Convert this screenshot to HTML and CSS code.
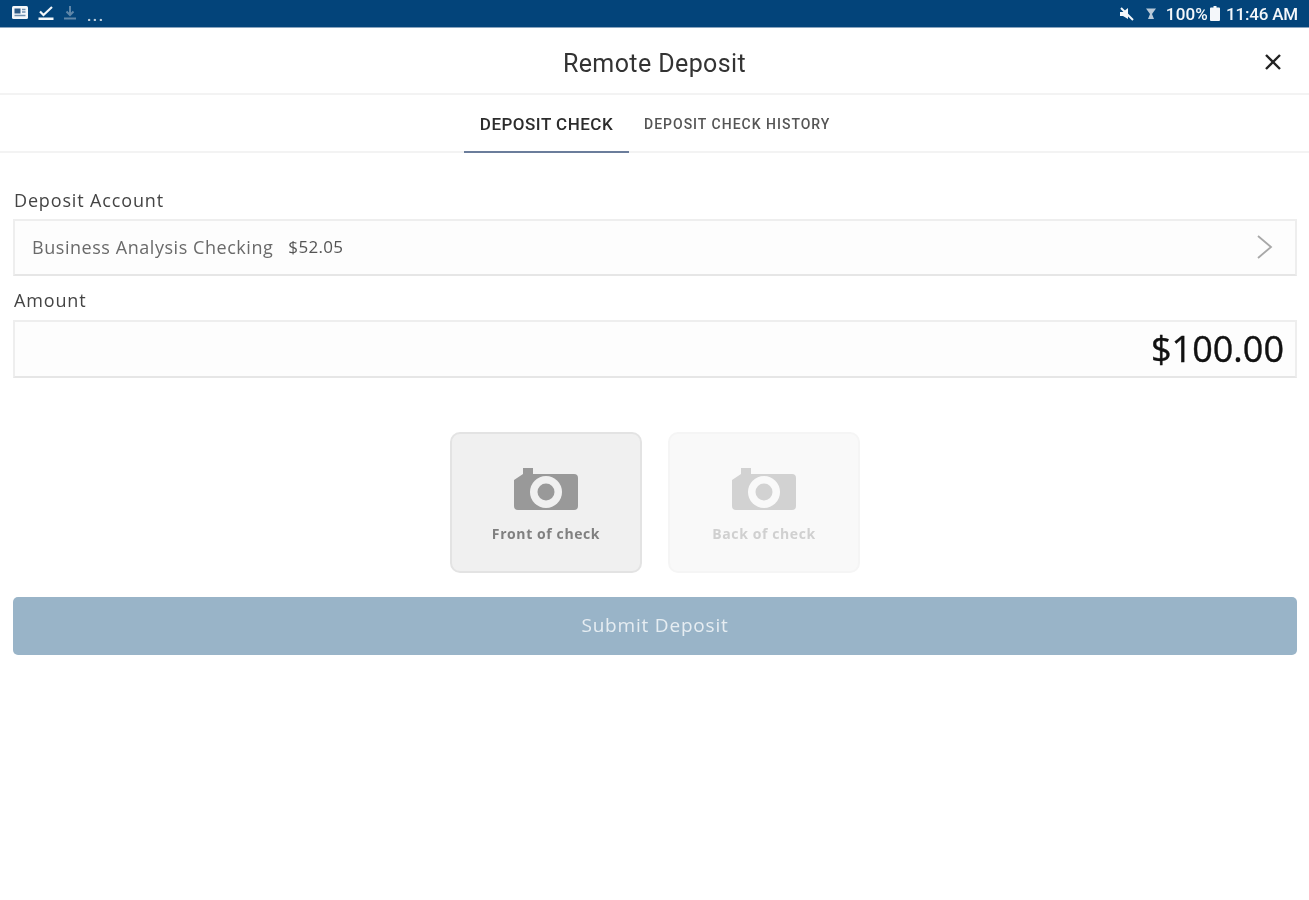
FILE: index.html
```html
<!DOCTYPE html>
<html lang="en">
<head>
<meta charset="utf-8">
<title>Remote Deposit</title>
<link rel="stylesheet" href="styles.css">
</head>
<body>
<div class="status">
  <div class="status-left">
    <svg class="si" width="18" height="16" viewBox="0 0 18 16"><rect x="1" y="1" width="16" height="13" rx="1.500" fill="#f4f7fa"/><rect x="3.500" y="3.500" width="6" height="5" fill="#2d5a85"/><path d="M11 4.500h3.500M11 7h3.500M3.500 10.500h11" stroke="#6f8fae" stroke-width="1.300"/></svg>
    <svg class="si" width="16" height="16" viewBox="0 0 16 16"><path d="M2 6.500 5.500 10 14 2" fill="none" stroke="#f4f7fa" stroke-width="2.200"/><rect x="0.500" y="12.500" width="15" height="2.500" fill="#f4f7fa"/></svg>
    <svg class="si" width="14" height="16" viewBox="0 0 14 16"><path d="M7 1v8M3.500 6.500 7 10l3.500-3.500M1 13.500h12" fill="none" stroke="#5f86a8" stroke-width="2"/></svg>
    <span class="dots">...</span>
  </div>
  <div class="status-right">
    <svg width="16" height="14" viewBox="0 0 16 14"><path d="M1 5h3l5-4v11L4 9H1z" fill="#f4f7fa"/><path d="M2 1l12 12" stroke="#f4f7fa" stroke-width="2"/></svg>
    <svg class="alarm" width="12" height="14" viewBox="0 0 12 14"><path d="M1 1.500h10L7 7l2 5H3l2-5z" fill="#b8c9d8"/></svg>
    <span class="pct">100%</span>
    <svg width="10" height="15" viewBox="0 0 10 15"><path d="M3.500 0h3v1.500H9a1 1 0 0 1 1 1V14a1 1 0 0 1-1 1H1a1 1 0 0 1-1-1V2.500a1 1 0 0 1 1-1h2.500z" fill="#f4f7fa"/></svg>
    <span class="time">11:46 AM</span>
  </div>
</div>
<header class="header">
  <h1 class="title">Remote Deposit</h1>
  <svg class="close" width="18" height="18" viewBox="0 0 18 18"><path d="M2 2l14 14M16 2 2 16" stroke="#222" stroke-width="2.400"/></svg>
</header>
<nav class="tabs">
  <div class="tab tab-active">DEPOSIT CHECK</div>
  <div class="tab tab-other">DEPOSIT CHECK HISTORY</div>
</nav>
<main class="form">
  <div class="label">Deposit Account</div>
  <div class="field account">
    <span class="acct-name">Business Analysis Checking</span>
    <span class="acct-bal">$52.05</span>
    <svg class="chev" width="18" height="26" viewBox="0 0 18 26"><path d="M2 2l13 11L2 24" fill="none" stroke="#a8a8a8" stroke-width="1.800"/></svg>
  </div>
  <div class="label label-amount">Amount</div>
  <div class="field amount">$100.00</div>
  <div class="cards">
    <div class="card card-on">
      <svg width="64" height="42" viewBox="0 0 64 42"><path d="M9 6V0h10v6h41a4 4 0 0 1 4 4v28a4 4 0 0 1-4 4H4a4 4 0 0 1-4-4V12z" fill="#999"/><circle cx="32" cy="24" r="16" fill="#f0f0f0"/><circle cx="32" cy="24" r="8.500" fill="#999"/></svg>
      <span class="card-text">Front of check</span>
    </div>
    <div class="card card-off">
      <svg width="64" height="42" viewBox="0 0 64 42"><path d="M9 6V0h10v6h41a4 4 0 0 1 4 4v28a4 4 0 0 1-4 4H4a4 4 0 0 1-4-4V12z" fill="#d2d2d2"/><circle cx="32" cy="24" r="16" fill="#f9f9f9"/><circle cx="32" cy="24" r="8.500" fill="#d2d2d2"/></svg>
      <span class="card-text">Back of check</span>
    </div>
  </div>
  <div class="submit">Submit Deposit</div>
</main>
</body>
</html>
```
FILE: styles.css
```css
* { box-sizing: border-box; }
html, body { margin: 0; height: 100%; background: #fff; }
body { font-family: "Open Sans", "Liberation Sans", sans-serif; overflow: hidden; filter: blur(0.5px); }

.status {
  height: 28px;
  background: #03447a;
  border-bottom: 1px solid #8aa5bf;
  color: #f4f7fa;
  display: flex;
  justify-content: space-between;
  align-items: center;
  padding: 0 11px 0 11px;
}
.status-left { display: flex; align-items: center; gap: 9px; padding-bottom: 1px; }
.dots { font: 700 15px/14px "Roboto", sans-serif; color: #c6d4e0; margin: 5px 0 0 1px; letter-spacing: 1.500px; }
.status-right { display: flex; align-items: center; gap: 4px; font: 500 17px/20px "Roboto", sans-serif; }
.alarm { margin-left: 6px; }
.pct { margin: 0 -2px 0 5px; letter-spacing: 0.200px; }
.time { margin-left: 2px; letter-spacing: -0.200px; }

.header {
  height: 67px;
  border-bottom: 2px solid #f3f3f3;
  display: flex;
  align-items: center;
  justify-content: center;
  position: relative;
  padding-top: 7px;
}
.title { margin: 0; font: 400 25px/30px "Roboto", sans-serif; color: #333; letter-spacing: 0.400px; }
.close { position: absolute; right: 27px; top: 25px; }

.tabs {
  height: 58px;
  border-bottom: 2px solid #f3f3f3;
  display: flex;
  justify-content: center;
  font-family: "Roboto", sans-serif;
}
.tab { display: flex; align-items: center; white-space: nowrap; }
.tab-active {
  width: 165px;
  justify-content: center;
  font-size: 17px;
  font-weight: 500;
  color: #2c2c2c;
  letter-spacing: 0.500px;
  border-bottom: 2px solid #6b7d9b;
  height: 58px;
  padding-top: 2px;
}
.tab-other {
  width: 216px;
  padding-left: 15px;
  padding-top: 2px;
  font-size: 14px;
  font-weight: 500;
  color: #555;
  letter-spacing: 1px;
}

.form { padding: 35px 12px 0 13px; }
.label { font-size: 18px; line-height: 24px; color: #444; letter-spacing: 0.850px; padding-left: 1px; }
.field { border: 2px solid #eeeeee; border-bottom-color: #e6e6e6; background: #fdfdfd; }
.account {
  height: 57px;
  margin-top: 7px;
  display: flex;
  align-items: center;
  padding: 0 21px 2px 17px;
}
.acct-name { font-size: 18px; color: #6a6a6a; letter-spacing: 0.550px; }
.acct-bal { font-size: 17px; color: #555; margin-left: 15px; letter-spacing: 0.300px; }
.chev { margin-left: auto; }
.label-amount { margin-top: 12px; }
.amount {
  height: 58px;
  margin-top: 8px;
  display: flex;
  align-items: center;
  justify-content: flex-end;
  padding: 0 11px 2px 0;
  font-size: 36px;
  font-weight: 500;
  -webkit-text-stroke: 0.4px #111;
  color: #111;
}
.cards { display: flex; justify-content: center; gap: 26px; margin-top: 54px; }
.card {
  width: 192px;
  height: 141px;
  border-radius: 10px;
  display: flex;
  flex-direction: column;
  align-items: center;
  padding-top: 34px;
}
.card-on { background: #f0f0f0; border: 2px solid #e3e3e3; color: #808080; }
.card-off { background: #f9f9f9; border: 2px solid #f5f5f5; color: #d0d0d0; }
.card-text { font-size: 14px; font-weight: 700; line-height: 18px; margin-top: 15px; letter-spacing: 0.600px; }
.submit {
  height: 58px;
  margin-top: 24px;
  background: #99b4c8;
  border-radius: 5px;
  color: #e6edf2;
  font-size: 19px;
  display: flex;
  align-items: center;
  justify-content: center;
  padding-bottom: 2px;
  letter-spacing: 0.800px;
}
```
